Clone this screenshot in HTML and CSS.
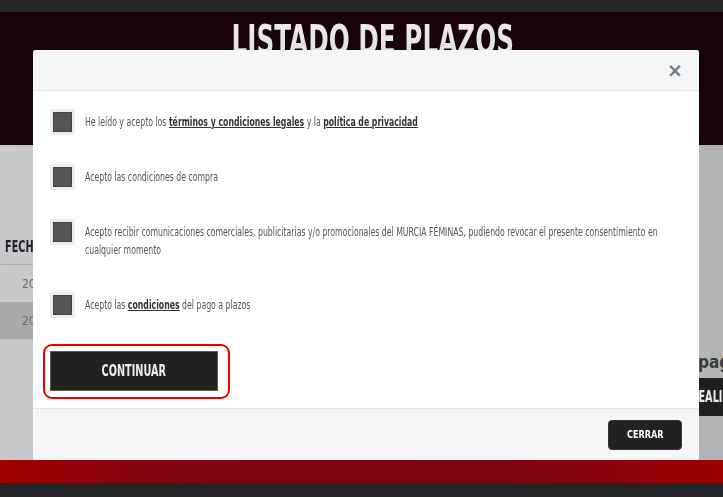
FILE: index.html
```html
<!DOCTYPE html>
<html lang="es">
<head>
<meta charset="utf-8">
<title>Listado de plazos</title>
<link rel="stylesheet" href="styles.css">
</head>
<body>
<div class="topbar"></div>
<header class="hero">
  <h1 class="hero-title">LISTADO DE PLAZOS</h1>
</header>
<main class="content">
  <div class="table-area">
    <div class="th"><span class="narrow">FECHA</span></div>
    <div class="tr">20</div>
    <div class="tr alt">20</div>
  </div>
  <aside class="side">
    <div class="pag">pag</div>
    <div class="realizar"><span class="narrow">REALIZAR</span></div>
  </aside>
</main>
<div class="redband"></div>
<div class="bottombar"></div>

<div class="modal">
  <div class="modal-header"><span class="close">&times;</span></div>
  <div class="modal-body">
    <div class="check-row">
      <span class="box"><span class="box-inner"></span></span>
      <p class="check-text">He leído y acepto los <a class="lnk">términos y condiciones legales</a> y la <a class="lnk">política de privacidad</a></p>
    </div>
    <div class="check-row">
      <span class="box"><span class="box-inner"></span></span>
      <p class="check-text">Acepto las condiciones de compra</p>
    </div>
    <div class="check-row">
      <span class="box"><span class="box-inner"></span></span>
      <p class="check-text">Acepto recibir comunicaciones comerciales, publicitarias y/o promocionales del MURCIA FÉMINAS, pudiendo revocar el presente consentimiento en cualquier momento</p>
    </div>
    <div class="check-row">
      <span class="box"><span class="box-inner"></span></span>
      <p class="check-text">Acepto las <a class="lnk">condiciones</a> del pago a plazos</p>
    </div>
    <button class="btn-continuar"><span class="btn-label">CONTINUAR</span></button>
  </div>
  <div class="modal-footer">
    <button class="btn-cerrar"><span class="btn-label-sm">CERRAR</span></button>
  </div>
</div>
</body>
</html>
```

FILE: styles.css
```css
* { box-sizing: border-box; margin: 0; padding: 0; }
html, body { width: 723px; height: 497px; overflow: hidden; }
body {
  position: relative;
  background: #242424;
  font-family: "DejaVu Sans Condensed", "DejaVu Sans", sans-serif;
}
.narrow { display: inline-block; transform: scaleX(0.72); transform-origin: 0 50%; white-space: nowrap; }
.topbar { height: 12px; background: #252525; }
.hero {
  height: 133px;
  background: #18030a;
  display: flex;
  justify-content: center;
  overflow: hidden;
  padding-left: 22px;
}
.hero-title {
  font-size: 41px;
  font-weight: 700;
  line-height: 40px;
  margin-top: 8px;
  white-space: nowrap;
  transform: scaleX(0.67);
  background: linear-gradient(180deg, #ececee 0%, #c2c2c6 100%);
  -webkit-background-clip: text;
  background-clip: text;
  color: transparent;
}
.content {
  height: 315px;
  display: flex;
  background: linear-gradient(90deg, #c9c9c9 0%, #bdbdbd 60%, #b4b4b4 100%);
}
.table-area { flex: 1; padding-top: 85px; }
.th {
  height: 35px;
  padding-left: 5px;
  display: flex;
  align-items: center;
  font-weight: 700;
  font-size: 15px;
  color: #1e1e2c;
  border-bottom: 1px solid #a8a8a8;
}
.tr {
  height: 37px;
  padding-left: 22px;
  display: flex;
  align-items: center;
  font-size: 12px;
  color: #6a6a6a;
}
.tr.alt { background: #a9a9a9; }
.side { width: 25px; padding-top: 207px; display: flex; flex-direction: column; }
.pag { font-size: 17px; font-weight: 700; color: #3a3a3a; height: 26px; white-space: nowrap; }
.realizar {
  height: 38px;
  background: #1f1f1f;
  color: #eee;
  font-weight: 700;
  font-size: 15px;
  display: flex;
  align-items: center;
  overflow: hidden;
  white-space: nowrap;
}
.realizar .narrow { margin-left: -7px; }
.redband {
  height: 23px;
  background: linear-gradient(90deg, #a00000 0%, #7d0610 25%, #7a0610 70%, #9c0000 100%);
}
.bottombar { height: 14px; background: #242424; }

.modal {
  position: absolute;
  left: 33px;
  top: 50px;
  width: 666px;
  height: 410px;
  background: #fff;
  border-radius: 3px;
  display: flex;
  flex-direction: column;
  overflow: hidden;
}
.modal-header {
  height: 41px;
  background: #f6f6f6;
  border-bottom: 1px solid #e4e4e4;
  display: flex;
  align-items: center;
  justify-content: flex-end;
  padding-right: 16px;
}
.close {
  font-family: "DejaVu Sans", sans-serif;
  font-size: 19px;
  font-weight: 700;
  color: #7a7a7a;
  line-height: 1;
}
.modal-body {
  flex: 1;
  padding: 18px 17px 0 17px;
  display: flex;
  flex-direction: column;
  align-items: flex-start;
}
.check-row {
  display: flex;
  align-items: flex-start;
  gap: 10px;
  margin-bottom: 27px;
}
.box {
  width: 25px;
  height: 26px;
  flex: none;
  background: #eeeeee;
  display: flex;
  align-items: center;
  justify-content: center;
}
.box-inner {
  width: 19px;
  height: 20px;
  background: #555555;
  border: 1px solid #444;
}
.check-text {
  flex: none;
  width: 815px;
  font-size: 12px;
  line-height: 18px;
  padding: 4px 0 6px;
  color: #555;
  transform: scaleX(0.72);
  transform-origin: 0 0;
  margin-right: -228px;
}
.lnk {
  color: #333;
  font-weight: 700;
  text-decoration: underline;
}
.btn-continuar {
  position: relative;
  margin-top: 4px;
  width: 168px;
  height: 40px;
  background: #222;
  border: 1px solid #5a5a5a;
  color: #eee;
  font-family: inherit;
  font-weight: 700;
  font-size: 15px;
  display: flex;
  align-items: center;
  justify-content: center;
}
.btn-label { display: inline-block; transform: scaleX(0.72); white-space: nowrap; }
.btn-continuar::after {
  content: "";
  position: absolute;
  left: -8px;
  top: -8px;
  right: -13px;
  bottom: -9px;
  border: 2px solid #ee0000;
  border-radius: 9px;
}
.modal-footer {
  height: 52px;
  background: #f6f6f6;
  border-top: 1px solid #e4e4e4;
  display: flex;
  align-items: center;
  justify-content: flex-end;
  padding-right: 17px;
}
.btn-cerrar {
  width: 74px;
  height: 30px;
  background: #222;
  border: 1px solid #333;
  border-radius: 4px;
  color: #fff;
  font-family: inherit;
  font-weight: 700;
  font-size: 11px;
  display: flex;
  align-items: center;
  justify-content: center;
}
.btn-label-sm { display: inline-block; transform: scaleX(0.82); white-space: nowrap; }
```
